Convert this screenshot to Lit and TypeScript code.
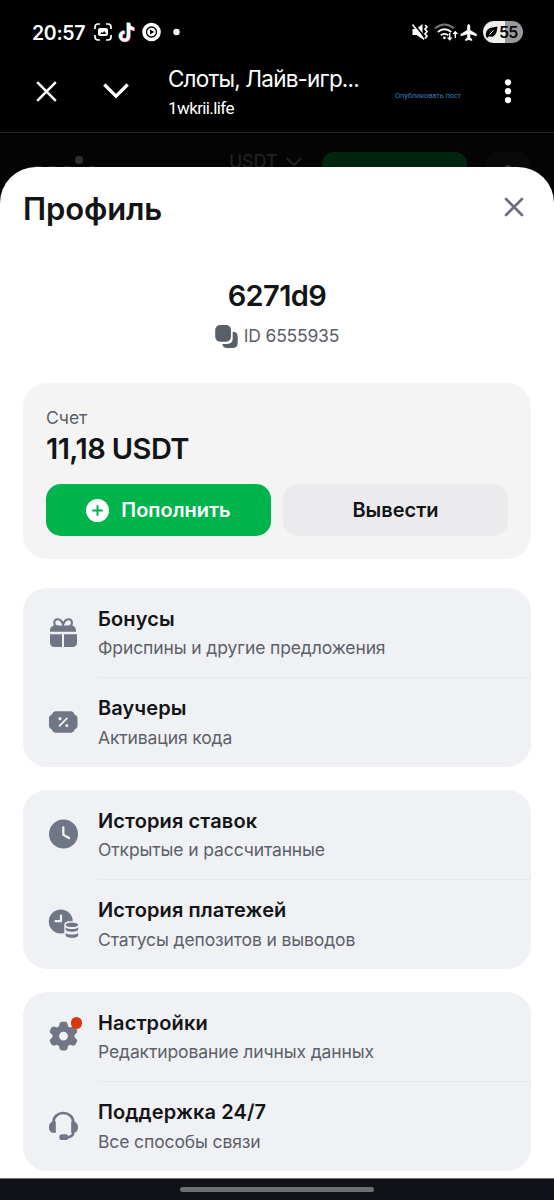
import { LitElement, html, css, svg } from "lit";
import { customElement, property } from "lit/decorators.js";

const icons: Record<string, unknown> = {
  gift: svg`<path d="M9.200 9.500C4.900 8.500 5.500 2.200 9.600 2.200c3 0 4.800 3 5.500 5.600.7-2.600 2.500-5.600 5.500-5.600 4.100 0 4.700 6.300.4 7.300" fill="none" stroke="#717684" stroke-width="2"/>
    <path d="M2 14.800V13.500c0-2.500 1.600-4.900 4.600-4.900h16.800c3 0 4.600 2.400 4.600 4.900v1.300zM2 17.200h12v12.800H6.500C3.600 30 2 28.300 2 25.800zM16 17.200H29v8.600c0 2.500-1.600 4.200-4.500 4.200H16z"/>`,
  voucher: svg`<path d="M8 4.200h14.500c2.300 0 3.700 1.500 4.200 3.600 1.700.6 2.800 1.700 2.800 3.500v7.500c0 1.800-1.100 2.900-2.800 3.500-.5 2.100-1.900 3.500-4.200 3.500H8c-2.300 0-3.700-1.400-4.200-3.500C2.100 21.700 1 20.600 1 18.800v-7.500c0-1.800 1.100-2.900 2.800-3.500.5-2.100 1.900-3.600 4.200-3.600z"/>
    <path d="M11.600 18.800l7.300-7.400" stroke="#f0f1f5" stroke-width="1.900" stroke-linecap="round"/><circle cx="12" cy="11.700" r="1.600" fill="#f0f1f5"/><circle cx="18.800" cy="18.600" r="1.600" fill="#f0f1f5"/>`,
  clock: svg`<circle cx="15.500" cy="15" r="14.500"/><path d="M15.300 8.500v7.300l5.700 3.300" fill="none" stroke="#f0f1f5" stroke-width="2.300" stroke-linecap="round" stroke-linejoin="round"/>`,
  payments: svg`<circle cx="12.800" cy="12.500" r="12"/><path d="M13 6.500v5.700H7.500" fill="none" stroke="#f0f1f5" stroke-width="2.200" stroke-linecap="round"/>
    <path d="M16.300 28.500v-13c0-3 4-3.600 8-3.600H31V31H16.300z" fill="#f0f1f5"/>
    <ellipse cx="23.900" cy="15.800" rx="6.300" ry="2.300"/><path d="M17.600 18.500c2.700 2 10 2 12.600 0v2.300c-.8 2.600-11.800 2.600-12.600 0zM17.600 23.900c2.700 2 10 2 12.600 0v2.500c-.8 3.200-11.800 3.200-12.600 0z"/>`,
  gear: svg`<path fill-rule="evenodd" d="M13.200.8h4.600l1.500 1.300.7 3.100 2 1.200 3.200-1 1.900.7 2.200 3.700-.4 2-2.400 2.100v2.300l2.400 2.200.4 1.900-2.200 3.800-1.900.7-3.200-1-2 1.200-.7 3.100-1.500 1.300h-4.600l-1.500-1.300-.7-3.100-2-1.200-3.200 1-1.900-.7-2.200-3.800.4-1.900 2.400-2.200v-2.300l-2.400-2.100-.4-2 2.200-3.700 1.900-.7 3.200 1 2-1.200.7-3.100zM15.500 10.700a4.400 4.400 0 1 0 0 8.800 4.400 4.400 0 0 0 0-8.800z"/>`,
  headset: svg`<path d="M5.500 12.500V11C5.500 5.500 10 2 15.300 2s9.900 3.500 9.900 9v10.500c0 2.700-2.200 4.300-5.200 4.900" fill="none" stroke="#717684" stroke-width="2.700"/>
    <path d="M7.800 10.600v11.200c-4 .6-6.800-1.200-6.800-5.600s2.800-6.200 6.800-5.600zM23.200 10.600v11.200c4 .6 6.800-1.200 6.800-5.600s-2.800-6.200-6.800-5.600z"/><rect x="11.300" y="23.300" width="9" height="5.700" rx="2.850"/>`,
};

@customElement("menu-row")
export class MenuRow extends LitElement {
  @property() icon = "";
  @property() heading = "";
  @property() note = "";
  @property({ type: Boolean }) dot = false;

  static styles = css`
    :host { display: flex; height: 89.500px; box-sizing: border-box; padding-left: 25px; }
    .icon { position: relative; width: 50px; flex: none; padding-top: 29px; }
    .icon svg { display: block; fill: #717684; overflow: visible; }
    .dot { position: absolute; left: 22.500px; top: 25px; width: 11.500px; height: 11.500px; border-radius: 50%; background: #d6390c; }
    .copy { flex: 1; padding-top: var(--lead, 17px); border-bottom: 1.500px solid var(--line, transparent); white-space: nowrap; }
    .heading { font-weight: 600; font-size: 20px; line-height: 28px; color: #131416; letter-spacing: .12px; }
    .note { font-size: 17.500px; line-height: 24px; padding-top: var(--note-gap, 3px); color: #5d6068; letter-spacing: -.12px; }
  `;

  render() {
    return html`<div class="icon"><svg width="31" height="31" viewBox="0 0 31 31">${icons[this.icon]}</svg>${this.dot ? html`<span class="dot"></span>` : ""}</div>
      <div class="copy"><div class="heading">${this.heading}</div><div class="note">${this.note}</div></div>`;
  }
}

const groups = [
  [
    { icon: "gift", heading: "Бонусы", note: "Фриспины и другие предложения" },
    { icon: "voucher", heading: "Ваучеры", note: "Активация кода" },
  ],
  [
    { icon: "clock", heading: "История ставок", note: "Открытые и рассчитанные" },
    { icon: "payments", heading: "История платежей", note: "Статусы депозитов и выводов" },
  ],
  [
    { icon: "gear", heading: "Настройки", note: "Редактирование личных данных", dot: true },
    { icon: "headset", heading: "Поддержка 24/7", note: "Все способы связи" },
  ],
];

@customElement("app-root")
export class AppRoot extends LitElement {
  static styles = css`
    :host { display: flex; flex-direction: column; width: 554px; height: 1200px; overflow: hidden; background: #000; font-family: Inter, "Noto Sans", sans-serif; color: #131416; }
    * { box-sizing: border-box; }
    svg { display: block; flex: none; }
    .status { height: 64px; display: flex; align-items: center; padding: 0 31px 0 32px; color: #fff; flex: none; }
    .clock { font-size: 19.500px; font-weight: 600; width: 61px; white-space: nowrap; letter-spacing: -.3px; padding-top: 1px; }
    .grow { flex: 1; }
    .battery { display: flex; align-items: center; width: 40px; height: 22px; border-radius: 11px; background: linear-gradient(90deg, #eee 0 22px, #999 22px); color: #080808; font-size: 16px; font-weight: 600; letter-spacing: -.7px; padding-left: 2px; }
    .browser { height: 69px; display: flex; padding-left: 36px; border-bottom: 1px solid #202020; color: #fff; flex: none; }
    .close { margin-top: 16.500px; width: 66px; }
    .down { margin-top: 18px; width: 66px; }
    .site { width: 227px; white-space: nowrap; }
    .site-title { font-size: 22.500px; line-height: 30px; letter-spacing: -.82px; }
    .site-url { font-family: Roboto, sans-serif; font-size: 17px; line-height: 24px; padding-top: 2px; letter-spacing: -.6px; }
    .publish { width: 109px; padding-top: 27px; font-family: Roboto, sans-serif; font-size: 7.500px; line-height: 10px; letter-spacing: -.12px; color: #397db8; white-space: nowrap; }
    .dots { margin-top: 14px; }
    .underlay { background: #040404; height: 68px; flex: none; display: flex; font-size: 18px; font-weight: 500; color: #202022; padding-top: 19px; }
    .brand { width: 229px; padding-left: 30px; }
    .currency { width: 56px; line-height: 20px; letter-spacing: -.2px; }
    .deposit { width: 145px; height: 40px; border-radius: 12px; background: #00260f; margin-left: 20px; }
    .user { width: 46px; height: 40px; border-radius: 12px; background: #09090a; margin-left: 18px; padding: 11px 0 0 16px; }
    .sheet { position: relative; z-index: 1; margin-top: -34px; background: #fff; height: 1011px; border-radius: 36px 36px 0 0; padding: 0 23px; flex: none; }
    .top { height: 111px; display: flex; justify-content: space-between; padding: 23px 7px 0 0; }
    .title { font-size: 31px; line-height: 38px; font-weight: 600; letter-spacing: -.15px; white-space: nowrap; }
    .x { margin-top: 7px; }
    .name { text-align: center; font-size: 29px; line-height: 36px; font-weight: 600; letter-spacing: -.6px; }
    .id { display: flex; justify-content: center; align-items: center; gap: 6px; height: 28px; margin-top: 8px; font-size: 17.500px; letter-spacing: -.2px; color: #5b5e66; }
    .id-text { padding-bottom: 2px; }
    .account { margin-top: 33px; height: 176px; border-radius: 24px; background: #f4f4f4; padding: 23px; }
    .label { font-size: 17.500px; line-height: 24px; color: #5b5e66; }
    .amount { font-size: 29px; line-height: 36px; font-weight: 600; letter-spacing: -.58px; padding-top: 1px; white-space: nowrap; }
    .buttons { display: flex; gap: 12px; margin-top: 17px; }
    .button { flex: 1; height: 52px; border-radius: 15px; display: flex; justify-content: center; align-items: center; gap: 12px; font-size: 20px; font-weight: 600; background: #ebebed; }
    .green { background: #00b44c; color: #fff; }
    .groups { display: flex; flex-direction: column; gap: 23px; margin-top: 29px; }
    .group { border-radius: 24px; background: #f0f1f5; height: 179px; overflow: hidden; }
    .lined { --line: #e6e7eb; }
    .last { --lead: 16.400px; --note-gap: 4px; }
    .nav { height: 22px; background: #101217; border-top: 1px solid #777; padding-top: 8px; flex: none; }
    .handle { width: 194px; height: 5px; border-radius: 3px; background: #6d6e71; margin: 0 auto; }
  `;

  render() {
    return html`
      <header class="status">
        <span class="clock">20:57</span>
        <svg width="88" height="24" viewBox="0 0 88 24" fill="#fff">
          <path d="M2 9V7q0-3 3-3h2M13 4h2q3 0 3 3v2M18 15v2q0 3-3 3h-2M7 20H5q-3 0-3-3v-2" fill="none" stroke="#fff" stroke-width="1.700"/>
          <path fill-rule="evenodd" d="M7 8h6q2 0 2 2v4q0 2-2 2H7q-2 0-2-2v-4q0-2 2-2zm.3 6h6l-2-3-1.700 1.900-.9-.8z"/>
          <g transform="translate(26 1.500)" fill="none" stroke-width="3.200"><path d="M9.600 1v13.400a4 4 0 1 1-4-4M9.600 2c.4 3 2.300 4.700 5.600 4.900" stroke="#28cfcf" transform="translate(-.7 0)"/><path d="M9.600 1.600V15a4 4 0 1 1-4-4M9.600 3c.4 3 2.300 4.700 5.600 4.900" stroke="#e93759" transform="translate(.7 .2)"/><path d="M9.600 1.300v13.400a4 4 0 1 1-4-4M9.600 2.500c.4 3 2.300 4.700 5.600 4.900" stroke="#fff"/></g>
          <circle cx="58.500" cy="12" r="9.300"/><circle cx="58.500" cy="12" r="5" fill="none" stroke="#000" stroke-width="1.300"/><path d="M57 9.400l4.300 2.600-4.300 2.600z" fill="#000"/>
          <circle cx="83.500" cy="12" r="3.200"/>
        </svg>
        <span class="grow"></span>
        <svg width="72" height="24" viewBox="0 0 72 24" fill="#fff">
          <path d="M1.500 9h4l6-5v15l-6-4h-4z"/><path d="M2.500 3l12 15.500" stroke="#000" stroke-width="1.600"/><path d="M1.500 4.500l11.500 15" stroke="#fff" stroke-width="1.500"/><path d="M14 5l2 2-2 2 2 2.500-2 2.500 2 2-2 2.500" fill="none" stroke="#fff" stroke-width="1.700"/>
          <g fill="none" stroke="#fff" stroke-width="1.900"><path d="M24 8.300q9.500-7.500 19 0" stroke="#777"/><path d="M26.800 12q6.700-5.400 13.400 0M29.800 15.300q3.700-2.800 7.500 0"/></g><circle cx="33.400" cy="17.800" r="1.400"/>
          <path d="M38.700 13v6.500m-2-2l2 2.300 2-2.300M44.300 18v-6m-2 2l2-2.300 2 2.300" fill="none" stroke="#fff" stroke-width="1.400"/>
          <path d="M56.200 6q1.500-4 3 0v4l6.500 4v2.200l-6.500-2v3.300l2 1.700V21l-3.500-1-3.500 1v-1.800l2-1.700v-3.300l-6.500 2V14l6.500-4z"/>
        </svg>
        <span class="battery"><svg width="14" height="14" viewBox="0 0 14 14"><path d="M1 11.500Q0 5 5 3q3-1 7.500-1.500Q12 10 8 11.500q-2 .8-4-.3L2.300 13z" fill="#080808"/><path d="M4.500 9.500L8.500 5.500" stroke="#eee"/></svg>55</span>
      </header>
      <nav class="browser">
        <div class="close"><svg width="21" height="21" viewBox="0 0 21 21"><path d="M1.200 1.200l18.600 18.600M19.800 1.200L1.200 19.800" stroke="#fff" stroke-width="2.600"/></svg></div>
        <div class="down"><svg width="28" height="18" viewBox="0 0 28 18"><path d="M2.300 2.500L14 14.200 25.700 2.500" fill="none" stroke="#fff" stroke-width="3.200"/></svg></div>
        <div class="site"><div class="site-title">Слоты, Лайв-игр...</div><div class="site-url">1wkrii.life</div></div>
        <div class="publish">Опубликовать пост</div>
        <svg class="dots" width="8" height="26" viewBox="0 0 8 26" fill="#fff"><circle cx="4" cy="4.300" r="3.100"/><circle cx="4" cy="13.200" r="3.100"/><circle cx="4" cy="22.100" r="3.100"/></svg>
      </nav>
      <div class="underlay">
        <div class="brand"><svg width="75" height="20" viewBox="0 0 75 20"><circle cx="49" cy="8" r="4" fill="#303030"/><path d="M3 16q5-2 10 0m5 0q4-2 8 0m7 0q4-2 8 0m6 0h4m8 0q3-2 6 0" stroke="#303030" stroke-width="2" fill="none"/></svg></div>
        <div class="currency">USDT</div>
        <svg width="17" height="20" viewBox="0 0 17 20"><path d="M1.500 6L9 13l7-7" fill="none" stroke="#202022" stroke-width="2.300"/></svg>
        <div class="deposit"></div>
        <div class="user"><svg width="14" height="14" viewBox="0 0 14 14"><circle cx="7" cy="6" r="4" fill="#303030"/></svg></div>
      </div>
      <main class="sheet">
        <div class="top"><div class="title">Профиль</div><svg class="x" width="20" height="20" viewBox="0 0 20 20"><path d="M2 2l16 16M18 2L2 18" stroke="#6d717e" stroke-width="2.700" stroke-linecap="round"/></svg></div>
        <div class="name">6271d9</div>
        <div class="id"><svg width="23" height="24" viewBox="0 0 23 24" fill="#5a5e69"><rect x=".2" y="1" width="15.800" height="16.800" rx="5"/><path d="M17.700 7.700c3.400 0 5 1.700 5 5v6.200c0 3.300-1.700 5-5 5h-5.400c-3 0-4.700-1.300-5-4h4.900c3.700 0 5.500-1.900 5.500-5.600z"/></svg><span class="id-text">ID 6555935</span></div>
        <section class="account">
          <div class="label">Счет</div><div class="amount">11,18 USDT</div>
          <div class="buttons">
            <div class="button green"><svg width="23" height="23" viewBox="0 0 23 23"><circle cx="11.500" cy="11.500" r="11.500" fill="#fff"/><path d="M11.500 7v9M7 11.500h9" stroke="#00b44c" stroke-width="2" stroke-linecap="round"/></svg><span>Пополнить</span></div>
            <div class="button"><span>Вывести</span></div>
          </div>
        </section>
        <div class="groups">
          ${groups.map((rows) => html`<section class="group">${rows.map((r, i) => html`<menu-row class=${i === 0 ? "lined" : "last"} .icon=${r.icon} .heading=${r.heading} .note=${r.note} .dot=${!!(r as any).dot}></menu-row>`)}</section>`)}
        </div>
      </main>
      <footer class="nav"><div class="handle"></div></footer>`;
  }
}
